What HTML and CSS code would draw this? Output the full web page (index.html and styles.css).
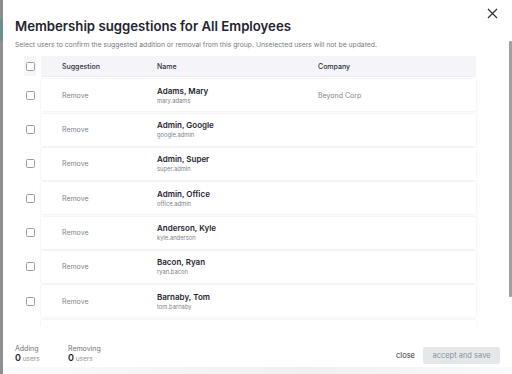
FILE: index.html
```html
<!DOCTYPE html>
<html>
<head>
<meta charset="utf-8">
<link rel="stylesheet" href="styles.css">
</head>
<body>
<div class="page">
  <div class="backdrop-strip"></div>
  <div class="modal">
    <div class="modal-head">
      <h1 class="title">Membership suggestions for All Employees</h1>
      <button class="close-x" aria-label="Close">
        <svg width="11" height="11" viewBox="0 0 11 11"><path d="M1 1L10 10M10 1L1 10" stroke="#2b2f36" stroke-width="1.2" fill="none"/></svg>
      </button>
    </div>
    <p class="subtitle">Select users to confirm the suggested addition or removal from this group. Unselected users will not be updated.</p>

    <div class="table-wrap">
      <div class="thead">
        <div class="cb-cell head-cb"><span class="cb"></span></div>
        <div class="card head-card">
          <div class="col c1">Suggestion</div>
          <div class="col c2">Name</div>
          <div class="col c3">Company</div>
        </div>
      </div>

      <div class="row">
        <div class="cb-cell"><span class="cb"></span></div>
        <div class="card">
          <div class="col c1 muted">Remove</div>
          <div class="col c2"><div class="nm">Adams, Mary</div><div class="un">mary.adams</div></div>
          <div class="col c3 muted">Beyond Corp</div>
        </div>
      </div>
      <div class="row">
        <div class="cb-cell"><span class="cb"></span></div>
        <div class="card">
          <div class="col c1 muted">Remove</div>
          <div class="col c2"><div class="nm">Admin, Google</div><div class="un">google.admin</div></div>
          <div class="col c3 muted"></div>
        </div>
      </div>
      <div class="row">
        <div class="cb-cell"><span class="cb"></span></div>
        <div class="card">
          <div class="col c1 muted">Remove</div>
          <div class="col c2"><div class="nm">Admin, Super</div><div class="un">super.admin</div></div>
          <div class="col c3 muted"></div>
        </div>
      </div>
      <div class="row">
        <div class="cb-cell"><span class="cb"></span></div>
        <div class="card">
          <div class="col c1 muted">Remove</div>
          <div class="col c2"><div class="nm">Admin, Office</div><div class="un">office.admin</div></div>
          <div class="col c3 muted"></div>
        </div>
      </div>
      <div class="row">
        <div class="cb-cell"><span class="cb"></span></div>
        <div class="card">
          <div class="col c1 muted">Remove</div>
          <div class="col c2"><div class="nm">Anderson, Kyle</div><div class="un">kyle.anderson</div></div>
          <div class="col c3 muted"></div>
        </div>
      </div>
      <div class="row">
        <div class="cb-cell"><span class="cb"></span></div>
        <div class="card">
          <div class="col c1 muted">Remove</div>
          <div class="col c2"><div class="nm">Bacon, Ryan</div><div class="un">ryan.bacon</div></div>
          <div class="col c3 muted"></div>
        </div>
      </div>
      <div class="row">
        <div class="cb-cell"><span class="cb"></span></div>
        <div class="card">
          <div class="col c1 muted">Remove</div>
          <div class="col c2"><div class="nm">Barnaby, Tom</div><div class="un">tom.barnaby</div></div>
          <div class="col c3 muted"></div>
        </div>
      </div>
      <div class="row">
        <div class="cb-cell"></div>
        <div class="card"></div>
      </div>
    </div>

    <div class="footer">
      <div class="stat">
        <div class="stat-label">Adding</div>
        <div class="stat-val"><b>0</b> users</div>
      </div>
      <div class="stat">
        <div class="stat-label">Removing</div>
        <div class="stat-val"><b>0</b> users</div>
      </div>
      <div class="actions">
        <button class="btn-link">close</button>
        <button class="btn-primary" disabled>accept and save</button>
      </div>
    </div>

    <div class="scroll-thumb"></div>
  </div>
  <div class="bottom-shade"></div>
</div>
</body>
</html>
```

FILE: styles.css
```css
* { box-sizing: border-box; }
html, body { margin: 0; padding: 0; }
body {
  width: 512px;
  height: 374px;
  overflow: hidden;
  background: #ffffff;
  font-family: Inter, "Liberation Sans", sans-serif;
  color: #1f2328;
}
.page {
  display: flex;
  flex-wrap: wrap;
  width: 512px;
  height: 374px;
  position: relative;
}
.backdrop-strip {
  width: 3px;
  height: 374px;
  background: linear-gradient(#8b8e8f 0, #8b8e8f 18px, #6f8f8c 20px, #6f8f8c 40px, #8d9091 42px, #8d9091 100%);
  position: absolute;
  left: 0;
  top: 0;
}
.modal {
  margin-left: 3px;
  width: 509px;
  height: 367px;
  background: #fff;
  position: relative;
  padding: 0 0 0 12px;
}
.modal-head {
  display: flex;
  justify-content: space-between;
  align-items: flex-start;
  padding-top: 8px;
}
.title {
  margin: 10px 0 0 0;
  font-size: 13.2px;
  line-height: 17px;
  font-weight: 600;
  color: #1f2430;
}
.close-x {
  border: 0;
  background: none;
  padding: 0;
  margin: 0 14px 0 0;
  width: 11px;
  height: 11px;
  display: flex;
}
.subtitle {
  margin: 5px 0 0 0;
  font-size: 6.8px;
  line-height: 9px;
  color: #747a82;
}
.table-wrap {
  margin-top: 7px;
  height: 270px;
  overflow: hidden;
  display: flex;
  flex-direction: column;
  gap: 2.33px;
  padding-right: 36px;
}
.thead, .row {
  display: flex;
  align-items: stretch;
  flex: none;
}
.thead { height: 20px; margin-bottom: 1px; }
.row { height: 32px; }
.cb-cell {
  width: 26px;
  display: flex;
  align-items: center;
  justify-content: flex-start;
  padding-left: 11px;
}
.head-cb { background: linear-gradient(90deg, transparent 9px, #f6f6fa 9px, #f6f6fa 21px, transparent 21px); }
.cb {
  width: 9px;
  height: 9px;
  border: 1px solid #9a9da3;
  border-radius: 1.5px;
  background: #fff;
  display: block;
}
.card {
  flex: 1;
  display: flex;
  align-items: center;
  background: #fff;
  box-shadow: 0 0 2px rgba(0,0,0,0.11);
}
.head-card {
  background: #f5f5f9;
  box-shadow: 0 1px 0 #eceef1;
  font-size: 7px;
  font-weight: 500;
  color: #2c3038;
}
.col { font-size: 7px; }
.c1 { width: 116px; padding-left: 21px; }
.c2 { width: 161px; }
.c3 { flex: 1; }
.muted { color: #80858c; }
.nm {
  font-size: 8px;
  line-height: 10px;
  font-weight: 600;
  color: #1f2430;
}
.un {
  font-size: 5.8px;
  line-height: 9px;
  color: #7b8088;
}
.footer {
  display: flex;
  align-items: flex-end;
  padding-top: 18px;
  padding-right: 12px;
}
.stat { width: 53px; }
.stat-label {
  font-size: 7px;
  line-height: 9px;
  color: #6d727a;
}
.stat-val {
  font-size: 6.5px;
  line-height: 10px;
  color: #8a8f96;
}
.stat-val b {
  font-size: 9px;
  font-weight: 600;
  color: #1f2430;
}
.actions {
  margin-left: auto;
  display: flex;
  align-items: center;
  gap: 8px;
}
.btn-link {
  border: 0;
  background: none;
  padding: 0;
  font-family: inherit;
  font-size: 7.5px;
  color: #2b2f36;
}
.btn-primary {
  border: 0;
  width: 77px;
  height: 17px;
  background: #e5e8ea;
  border-radius: 2px;
  font-family: inherit;
  font-size: 7.5px;
  color: #8b9096;
  padding: 0;
}
.scroll-thumb {
  position: absolute;
  left: 506px;
  top: 41px;
  width: 2.5px;
  height: 256px;
  background: #9ea1a4;
  border-radius: 1px;
}
.bottom-shade {
  width: 512px;
  height: 7px;
  background: linear-gradient(90deg, #fbfbfb, #f0f0f0 60%, #fafafa);
}
```
